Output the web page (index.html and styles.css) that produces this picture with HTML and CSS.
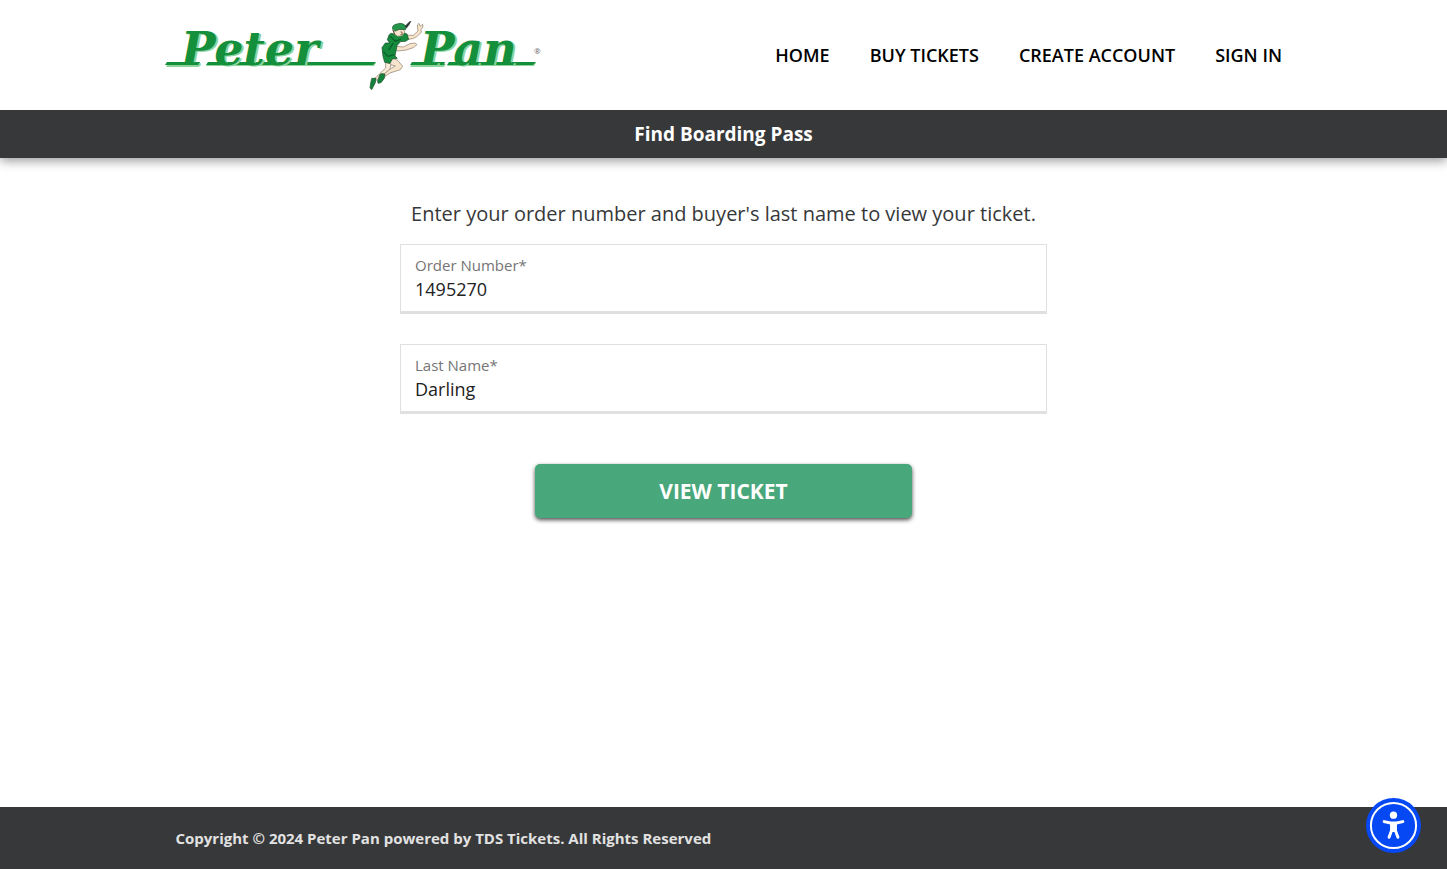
FILE: index.html
```html
<!DOCTYPE html>
<html lang="en">
<head>
<meta charset="utf-8">
<meta name="viewport" content="width=device-width, initial-scale=1">
<title>Find Boarding Pass - Peter Pan</title>
<link rel="stylesheet" href="styles.css">
</head>
<body class="page">
<header class="header">
  <div class="header-inner">
    <a class="logo" href="#" aria-label="Peter Pan home">
      <svg class="logo-art" viewBox="0 0 376 70" width="376" height="70" aria-hidden="true">
        <g fill="#8cd49b">
          <path d="M3 44 L35 44 L34 47 L1 47Z M43 43 L211 43 L209 46 L41 46Z M247 44 L281 44 L279 47 L245 47Z M284 43 L371 43 L369 46 L282 46Z"/>
        </g>
        <g fill="#148f3c">
          <path d="M2 42 L35 42 L34 45 L0 45Z M43 42 L211 42 L208 45 L41 45Z M247 42 L280 42 L279 45 L245 45Z M284 42 L371 42 L368 45 L282 45Z"/>
        </g>
        <text class="logo-word" x="16" y="45">Peter</text>
        <text class="logo-word" x="255" y="45">Pan</text>
        <text class="logo-mark" x="369" y="34">®</text>
        <g transform="translate(185 -5) scale(.3333)" stroke-linejoin="round" stroke-linecap="round">
          <path d="M172 61 L190 61 L204 48 L202 30 L207 25 L211 34 L218 28 L219 36 L213 44 L214 52 L200 65 L188 71 L174 73Z" fill="#f6e4cd" stroke="#8d7965" stroke-width="2"/>
          <path d="M137 94 L160 96 L180 86 L196 84 L201 89 L190 98 L169 105 L144 108 L132 102Z" fill="#f6e4cd" stroke="#8d7965" stroke-width="2"/>
          <path d="M110 143 L126 127 L144 137 L158 154 L151 164 L120 174 L105 184 L101 178 L117 164 L136 153 L120 149Z" fill="#f6e4cd" stroke="#8d7965" stroke-width="2"/>
          <path d="M108 142 L123 147 L120 162 L101 178 L81 196 L72 193 L90 175 L106 160Z" fill="#f9ebd9" stroke="#8d7965" stroke-width="2"/>
          <path d="M90 178 Q97 173 105 178 L103 190 L93 203 L84 205 L83 198Z M66 190 L78 190 L76 203 L65 224 L60 218 L62 204Z" fill="#12833a" stroke="#234a2c" stroke-width="2"/>
          <path d="M124 55 L140 59 L161 53 L171 57 L176 73 L167 79 L151 80 L141 92 L138 108 L135 123 L142 130 L127 132 L120 145 L104 142 L99 124 L96 98 L106 84 L119 84 L112 74 L117 60Z" fill="#168b3d" stroke="#17492a" stroke-width="2"/>
          <path d="M122 65 L136 79 L151 73 M101 110 L114 124 L132 119 M129 85 L117 104" fill="none" stroke="#0b5f29" stroke-width="4"/>
          <path d="M134 45 L161 43 L164 52 L157 62 L143 64 L133 57Z" fill="#f8e5cf" stroke="#8d7965" stroke-width="2"/>
          <path d="M128 43 Q124 30 141 27 Q157 21 169 34 L167 44 L147 43 L137 48Z" fill="#23964a" stroke="#24532f" stroke-width="2"/>
          <path d="M164 34 L179 19 L184 18 L179 28 L170 40Z" fill="#333a36"/>
          <path d="M153 51 L156 52 M153 58 L158 57 M129 46 L134 58" fill="none" stroke="#634832" stroke-width="3"/>
        </g>
      </svg>
    </a>
    <nav class="nav" aria-label="Main">
      <a class="nav-link" href="#">HOME</a>
      <a class="nav-link" href="#">BUY TICKETS</a>
      <a class="nav-link" href="#">CREATE ACCOUNT</a>
      <a class="nav-link" href="#">SIGN IN</a>
    </nav>
  </div>
</header>
<h1 class="title-bar">Find Boarding Pass</h1>
<main class="main">
  <form class="form">
    <p class="intro">Enter your order number and buyer's last name to view your ticket.</p>
    <div class="field">
      <label class="field-label" for="order">Order Number*</label>
      <input class="field-input" id="order" type="text" value="1495270">
    </div>
    <div class="field">
      <label class="field-label" for="last-name">Last Name*</label>
      <input class="field-input" id="last-name" type="text" value="Darling">
    </div>
    <button class="submit" type="button">VIEW TICKET</button>
  </form>
</main>
<footer class="footer">
  <p class="copyright">Copyright © 2024 Peter Pan powered by TDS Tickets. All Rights Reserved</p>
</footer>
<button class="access" type="button" aria-label="Accessibility menu">
  <svg viewBox="0 0 56 56" width="55" height="55" aria-hidden="true">
    <circle cx="28" cy="28" r="28" fill="#0648f4"/>
    <circle cx="28" cy="28" r="23" fill="none" stroke="#fff" stroke-width="2"/>
    <circle cx="28" cy="17.500" r="3.700" fill="#fff"/>
    <path d="M18.500 24 L25 25.500 H31 L37.500 24 M28 26 V33 M26 26 V33 L23.500 40 M30 26 V33 L32.500 40" fill="none" stroke="#fff" stroke-width="3" stroke-linecap="round" stroke-linejoin="round"/>
  </svg>
</button>
</body>
</html>
```
FILE: styles.css
```css
* {
  box-sizing: border-box;
}

.page {
  display: flex;
  flex-direction: column;
  min-height: 100vh;
  margin: 0;
  background: #fff;
  color: #373839;
  font-family: "Open Sans", "Noto Sans", sans-serif;
}

.header {
  z-index: 1;
  padding: 20px 24px;
  background: #fff;
}

.header-inner {
  display: flex;
  flex-wrap: wrap;
  align-items: center;
  justify-content: space-between;
  gap: 16px;
  max-width: 1117px;
  margin: 0 auto;
}

.logo,
.logo-art {
  display: block;
}

.logo-art {
  max-width: 100%;
  overflow: visible;
}

.logo-word {
  fill: #148f3c;
  font-family: "DejaVu Serif", serif;
  font-size: 46px;
  font-style: italic;
  font-weight: 700;
  text-shadow: 2px 1px 0 #8cd49b;
}

.logo-mark {
  fill: #666;
  font-size: 8px;
}

.nav {
  display: flex;
  flex-wrap: wrap;
  gap: 40px;
}

.nav-link {
  color: #000;
  font-size: 18px;
  font-weight: 600;
  line-height: 24px;
  text-decoration: none;
}

.title-bar {
  margin: 0;
  padding: 12px;
  background: #373839;
  box-shadow: 0 3px 10px rgba(0, 0, 0, 0.4);
  color: #fff;
  font-size: 19px;
  font-weight: 700;
  line-height: 24px;
  text-align: center;
}

.main {
  flex: 1;
  padding: 40px 16px;
}

.form {
  display: flex;
  flex-direction: column;
  max-width: 647px;
  margin: 0 auto;
}

.intro {
  margin: 0 0 14px;
  font-size: 20px;
  line-height: 32px;
  text-align: center;
}

.field {
  display: flex;
  flex-direction: column;
  margin-bottom: 30px;
  padding: 9px 14px;
  border: 1px solid #e0e0e0;
  border-bottom-width: 3px;
}

.field-label {
  color: #757575;
  font-size: 15px;
  line-height: 22px;
}

.field-input {
  width: 100%;
  height: 26px;
  padding: 0;
  border: 0;
  outline: 0;
  background: transparent;
  color: #222;
  font-family: inherit;
  font-size: 18px;
}

.submit {
  align-self: center;
  width: 377px;
  max-width: 100%;
  margin-top: 20px;
  padding: 12px;
  border: 0;
  border-radius: 5px;
  background: #48a77b;
  box-shadow: 0 2px 4px rgba(0, 0, 0, 0.7);
  color: #fff;
  font-family: inherit;
  font-size: 21px;
  font-weight: 700;
  line-height: 30px;
}

.footer {
  padding: 20px 24px;
  background: #373839;
}

.copyright {
  max-width: 1096px;
  margin: 0 auto;
  color: #e2e2e2;
  font-size: 15px;
  font-weight: 700;
  line-height: 22px;
}

.access {
  position: fixed;
  right: 26px;
  bottom: 16px;
  padding: 0;
  border: 0;
  border-radius: 50%;
  background: none;
}

.access svg {
  display: block;
}
```
